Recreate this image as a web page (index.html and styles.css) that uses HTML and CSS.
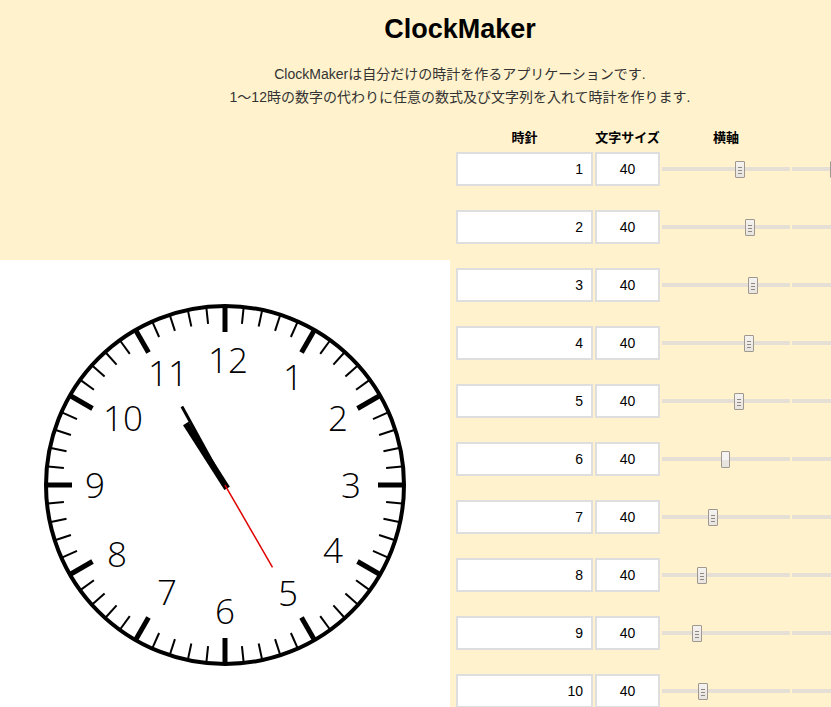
FILE: index.html
```html
<!DOCTYPE html>
<html lang="ja">
<head>
<meta charset="utf-8">
<title>ClockMaker</title>
<link rel="stylesheet" href="styles.css">
</head>
<body>
<div class="page">
  <header class="intro">
    <h1 class="title">ClockMaker</h1>
    <p class="lead">ClockMakerは自分だけの時計を作るアプリケーションです.<br>1～12時の数字の代わりに任意の数式及び文字列を入れて時計を作ります.</p>
  </header>
  <main class="main">
    <section class="clock-panel">
      <svg class="clock" width="450" height="450" viewBox="0 0 450 450">
        <defs>
          <line id="minor" x1="225" y1="47" x2="225" y2="63" stroke="#000" stroke-width="2"/>
          <line id="major" x1="225" y1="47" x2="225" y2="72" stroke="#000" stroke-width="5"/>
        </defs>
        <circle cx="225" cy="225" r="179" fill="#fff" stroke="#000" stroke-width="4"/>
        <g>
          <use href="#major" transform="rotate(0 225 225)"/>
          <use href="#minor" transform="rotate(6 225 225)"/>
          <use href="#minor" transform="rotate(12 225 225)"/>
          <use href="#minor" transform="rotate(18 225 225)"/>
          <use href="#minor" transform="rotate(24 225 225)"/>
          <use href="#major" transform="rotate(30 225 225)"/>
          <use href="#minor" transform="rotate(36 225 225)"/>
          <use href="#minor" transform="rotate(42 225 225)"/>
          <use href="#minor" transform="rotate(48 225 225)"/>
          <use href="#minor" transform="rotate(54 225 225)"/>
          <use href="#major" transform="rotate(60 225 225)"/>
          <use href="#minor" transform="rotate(66 225 225)"/>
          <use href="#minor" transform="rotate(72 225 225)"/>
          <use href="#minor" transform="rotate(78 225 225)"/>
          <use href="#minor" transform="rotate(84 225 225)"/>
          <use href="#major" transform="rotate(90 225 225)"/>
          <use href="#minor" transform="rotate(96 225 225)"/>
          <use href="#minor" transform="rotate(102 225 225)"/>
          <use href="#minor" transform="rotate(108 225 225)"/>
          <use href="#minor" transform="rotate(114 225 225)"/>
          <use href="#major" transform="rotate(120 225 225)"/>
          <use href="#minor" transform="rotate(126 225 225)"/>
          <use href="#minor" transform="rotate(132 225 225)"/>
          <use href="#minor" transform="rotate(138 225 225)"/>
          <use href="#minor" transform="rotate(144 225 225)"/>
          <use href="#major" transform="rotate(150 225 225)"/>
          <use href="#minor" transform="rotate(156 225 225)"/>
          <use href="#minor" transform="rotate(162 225 225)"/>
          <use href="#minor" transform="rotate(168 225 225)"/>
          <use href="#minor" transform="rotate(174 225 225)"/>
          <use href="#major" transform="rotate(180 225 225)"/>
          <use href="#minor" transform="rotate(186 225 225)"/>
          <use href="#minor" transform="rotate(192 225 225)"/>
          <use href="#minor" transform="rotate(198 225 225)"/>
          <use href="#minor" transform="rotate(204 225 225)"/>
          <use href="#major" transform="rotate(210 225 225)"/>
          <use href="#minor" transform="rotate(216 225 225)"/>
          <use href="#minor" transform="rotate(222 225 225)"/>
          <use href="#minor" transform="rotate(228 225 225)"/>
          <use href="#minor" transform="rotate(234 225 225)"/>
          <use href="#major" transform="rotate(240 225 225)"/>
          <use href="#minor" transform="rotate(246 225 225)"/>
          <use href="#minor" transform="rotate(252 225 225)"/>
          <use href="#minor" transform="rotate(258 225 225)"/>
          <use href="#minor" transform="rotate(264 225 225)"/>
          <use href="#major" transform="rotate(270 225 225)"/>
          <use href="#minor" transform="rotate(276 225 225)"/>
          <use href="#minor" transform="rotate(282 225 225)"/>
          <use href="#minor" transform="rotate(288 225 225)"/>
          <use href="#minor" transform="rotate(294 225 225)"/>
          <use href="#major" transform="rotate(300 225 225)"/>
          <use href="#minor" transform="rotate(306 225 225)"/>
          <use href="#minor" transform="rotate(312 225 225)"/>
          <use href="#minor" transform="rotate(318 225 225)"/>
          <use href="#minor" transform="rotate(324 225 225)"/>
          <use href="#major" transform="rotate(330 225 225)"/>
          <use href="#minor" transform="rotate(336 225 225)"/>
          <use href="#minor" transform="rotate(342 225 225)"/>
          <use href="#minor" transform="rotate(348 225 225)"/>
          <use href="#minor" transform="rotate(354 225 225)"/>
        </g>
        <g class="numerals">
          <text x="228" y="112.5">12</text>
          <text x="293" y="129.5">1</text>
          <text x="338" y="170.5">2</text>
          <text x="351" y="237.5">3</text>
          <text x="333" y="302.5">4</text>
          <text x="288" y="345.5">5</text>
          <text x="225" y="363.5">6</text>
          <text x="167" y="344.5">7</text>
          <text x="117" y="306.5">8</text>
          <text x="95" y="237.5">9</text>
          <text x="123" y="170.5">10</text>
          <text x="168" y="125.5">11</text>
        </g>
        <line x1="225" y1="229" x2="225" y2="152" stroke="#000" stroke-width="6.5" transform="rotate(327.5 225 225)"/>
        <line x1="225" y1="228" x2="225" y2="135.5" stroke="#000" stroke-width="3" transform="rotate(331.2 225 225)"/>
        <line x1="225" y1="225" x2="225" y2="130" stroke="#e00000" stroke-width="1.5" transform="rotate(150 225 225)"/>
      </svg>
    </section>
    <section class="controls">
      <div class="controls-head">
        <span>時針</span><span>文字サイズ</span><span>横軸</span><span></span>
      </div>
      <div class="rows">
        <div class="row"><input class="label-input" type="text" value="1"><input class="size-input" type="text" value="40"><input class="slider" type="range" min="0" max="1000" value="619"><input class="slider" type="range" min="0" max="1000" value="322"></div>
        <div class="row"><input class="label-input" type="text" value="2"><input class="size-input" type="text" value="40"><input class="slider" type="range" min="0" max="1000" value="703"><input class="slider" type="range" min="0" max="1000" value="500"></div>
        <div class="row"><input class="label-input" type="text" value="3"><input class="size-input" type="text" value="40"><input class="slider" type="range" min="0" max="1000" value="729"><input class="slider" type="range" min="0" max="1000" value="600"></div>
        <div class="row"><input class="label-input" type="text" value="4"><input class="size-input" type="text" value="40"><input class="slider" type="range" min="0" max="1000" value="695"><input class="slider" type="range" min="0" max="1000" value="700"></div>
        <div class="row"><input class="label-input" type="text" value="5"><input class="size-input" type="text" value="40"><input class="slider" type="range" min="0" max="1000" value="610"><input class="slider" type="range" min="0" max="1000" value="750"></div>
        <div class="row"><input class="label-input" type="text" value="6"><input class="size-input" type="text" value="40"><input class="slider plain" type="range" min="0" max="1000" value="496"><input class="slider" type="range" min="0" max="1000" value="760"></div>
        <div class="row"><input class="label-input" type="text" value="7"><input class="size-input" type="text" value="40"><input class="slider" type="range" min="0" max="1000" value="390"><input class="slider" type="range" min="0" max="1000" value="750"></div>
        <div class="row"><input class="label-input" type="text" value="8"><input class="size-input" type="text" value="40"><input class="slider" type="range" min="0" max="1000" value="294"><input class="slider" type="range" min="0" max="1000" value="700"></div>
        <div class="row"><input class="label-input" type="text" value="9"><input class="size-input" type="text" value="40"><input class="slider" type="range" min="0" max="1000" value="252"><input class="slider" type="range" min="0" max="1000" value="600"></div>
        <div class="row"><input class="label-input" type="text" value="10"><input class="size-input" type="text" value="40"><input class="slider" type="range" min="0" max="1000" value="302"><input class="slider" type="range" min="0" max="1000" value="500"></div>
        <div class="row"><input class="label-input" type="text" value="11"><input class="size-input" type="text" value="40"><input class="slider" type="range" min="0" max="1000" value="390"><input class="slider" type="range" min="0" max="1000" value="420"></div>
        <div class="row"><input class="label-input" type="text" value="12"><input class="size-input" type="text" value="40"><input class="slider" type="range" min="0" max="1000" value="510"><input class="slider" type="range" min="0" max="1000" value="380"></div>
      </div>
    </section>
  </main>
</div>
</body>
</html>
```
FILE: styles.css
```css
html {
  overflow: hidden;
}

body {
  margin: 0;
  background: #fff2cc;
  font-family: "Liberation Sans", Arial, "Noto Sans CJK JP", sans-serif;
  color: #000;
}

.page {
  width: 920px;
}

.intro {
  text-align: center;
}

.title {
  margin: 13px 0 0;
  font-size: 27px;
  line-height: 32px;
  font-weight: bold;
}

.lead {
  margin: 18px 0 0;
  font-size: 14px;
  line-height: 23px;
  color: #333;
}

.main {
  display: flex;
  align-items: center;
}

.clock-panel {
  width: 450px;
  height: 450px;
  background: #fff;
  flex: none;
}

.clock {
  display: block;
}

.numerals text {
  font-family: "Open Sans", "DejaVu Sans", sans-serif;
  font-weight: 300;
  font-size: 35px;
  text-anchor: middle;
  fill: #000;
}

.controls {
  padding: 19px 0 37px 6px;
}

.controls-head {
  display: grid;
  grid-template-columns: 137px 65px 128px 128px;
  column-gap: 2px;
  height: 18px;
  margin-bottom: 6px;
  font-family: "Noto Sans CJK JP", sans-serif;
  font-size: 13px;
  font-weight: bold;
  line-height: 18px;
  text-align: center;
}

.rows {
  display: flex;
  flex-direction: column;
  gap: 24px;
}

.row {
  display: grid;
  grid-template-columns: 137px 65px 128px 128px;
  column-gap: 2px;
  align-items: center;
  height: 34px;
}

.label-input,
.size-input {
  box-sizing: border-box;
  height: 34px;
  margin: 0;
  border: 2px solid #dedede;
  background: #fff;
  font-family: "Liberation Sans", Arial, sans-serif;
  font-size: 14px;
  color: #000;
  outline: none;
}

.label-input {
  width: 137px;
  padding: 0 8px;
  text-align: right;
}

.size-input {
  width: 65px;
  padding: 0 4px;
  text-align: center;
}

.slider {
  -webkit-appearance: none;
  appearance: none;
  width: 128px;
  height: 17px;
  margin: 0;
  padding: 0;
  background: transparent;
}

.slider::-webkit-slider-runnable-track {
  height: 4px;
  background: #e6dfd5;
  border: none;
}

.slider::-webkit-slider-thumb {
  -webkit-appearance: none;
  appearance: none;
  box-sizing: border-box;
  width: 10px;
  height: 17px;
  margin-top: -6.5px;
  border: 1px solid #9e9891;
  border-radius: 1px;
  background:
    linear-gradient(#8e8984, #8e8984) 2px 5px / 4px 1px no-repeat,
    linear-gradient(#8e8984, #8e8984) 2px 8px / 4px 1px no-repeat,
    linear-gradient(#8e8984, #8e8984) 2px 11px / 4px 1px no-repeat,
    linear-gradient(#f5f3f0, #e8e4df);
}

.slider.plain::-webkit-slider-thumb {
  width: 9px;
  background: linear-gradient(#f5f4f2 0, #f5f4f2 50%, #e8e5e1 50%, #e8e5e1 100%);
}
```
